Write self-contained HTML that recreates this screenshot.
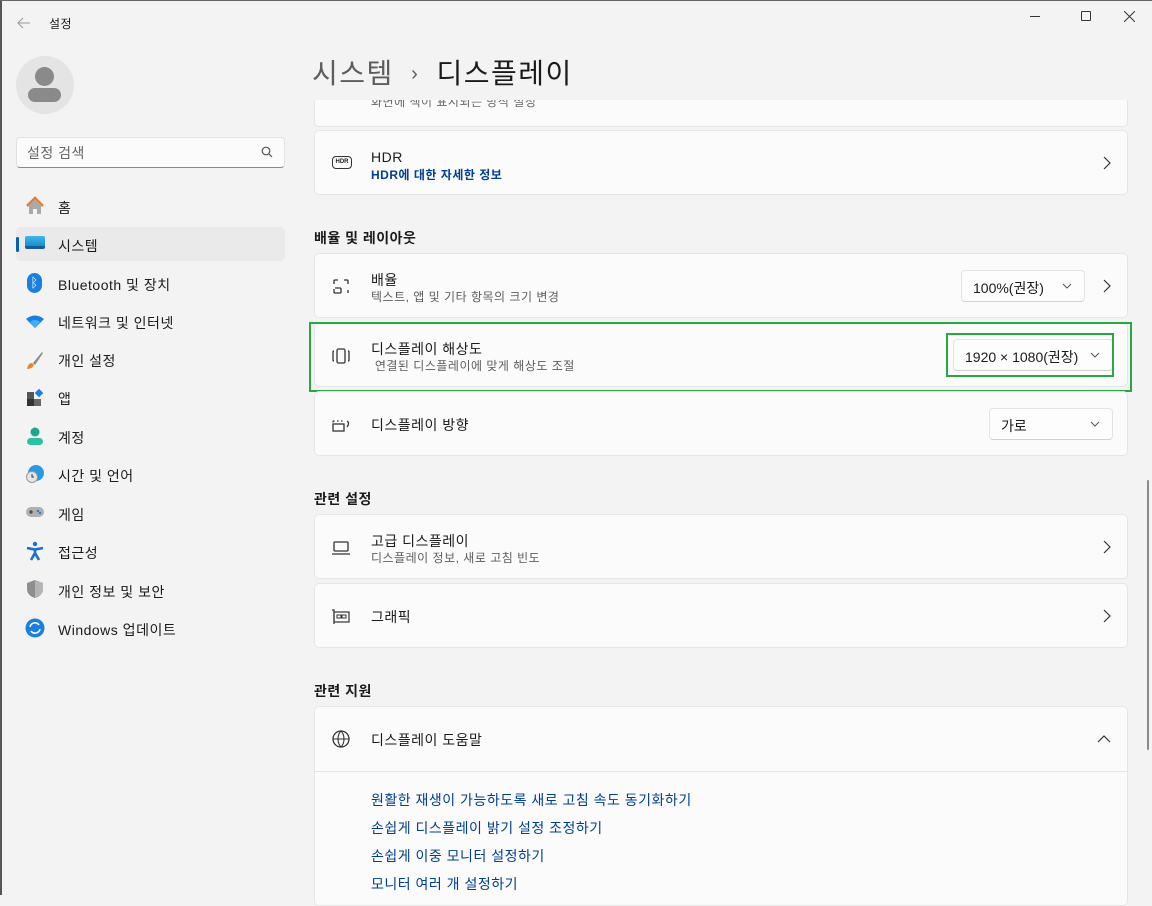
<!DOCTYPE html>
<html><head><meta charset="utf-8"><style>
*{box-sizing:border-box;margin:0;padding:0}
body{width:1152px;height:895px;overflow:hidden;background:#f3f3f3;font-family:"Liberation Sans","Noto Sans CJK KR",sans-serif;color:#1b1b1b;position:relative;font-size:14px;letter-spacing:0.5px}
.a{position:absolute}
.card{position:absolute;left:314px;width:814px;background:#fbfbfb;border:1px solid #e5e5e5;border-radius:5px}
.t{position:absolute;left:56px;font-size:14px;color:#1b1b1b}
.s{position:absolute;left:56px;font-size:12px;color:#5d5d5d}
.ic{position:absolute;left:16px}
.chev{position:absolute;right:16px;top:50%;margin-top:-7px}
.dd{position:absolute;background:#fdfdfd;border:1px solid #e3e3e3;border-bottom-color:#d0d0d0;border-radius:4px;height:32px;font-size:14px;padding:7px 11px;letter-spacing:0}
.dd svg{position:absolute;right:12px;top:12px}
.hd{position:absolute;left:314px;font-size:14px;font-weight:bold;color:#1b1b1b}
.nav{position:absolute;left:58px;font-size:14px;color:#1b1b1b}
.ni{position:absolute;left:25px;width:20px;height:20px}
.lk{position:absolute;left:371px;font-size:14px;color:#003e92}
</style></head><body>
<div class="a" style="left:0;top:0;width:2px;height:895px;background:#555"></div>
<div class="a" style="left:0;top:0;width:1152px;height:1px;background:#666"></div>
<svg class="a" style="left:17px;top:17px" width="14" height="12"><path d="M13 6H1M6 1L1 6l5 5" stroke="#999" fill="none"/></svg>
<div class="a" style="left:49px;top:15px;font-size:12px">설정</div>
<div class="a" style="left:1030px;top:16px;width:10px;height:1px;background:#333"></div>
<div class="a" style="left:1081px;top:11px;width:10px;height:10px;border:1px solid #333;border-radius:1px"></div>
<svg class="a" style="left:1124px;top:11px" width="11" height="11"><path d="M0 0L11 11M11 0L0 11" stroke="#333"/></svg>
<div class="a" style="left:16px;top:56px;width:58px;height:58px;border-radius:50%;background:#e4e4e4"></div>
<div class="a" style="left:35px;top:67px;width:19px;height:19px;border-radius:50%;background:#8a8a8a"></div>
<div class="a" style="left:28px;top:88px;width:33px;height:14px;border-radius:7px;background:#8a8a8a"></div>
<div class="a" style="left:16px;top:137px;width:269px;height:31px;background:#fbfbfb;border:1px solid #e2e2e2;border-bottom:1px solid #8a8a8a;border-radius:4px"></div>
<div class="a" style="left:27px;top:143px;font-size:14px;color:#666">설정 검색</div>
<svg class="a" style="left:261px;top:146px" width="12" height="12"><circle cx="5" cy="5" r="3.8" stroke="#555" fill="none" stroke-width="1.2"/><path d="M8 8l3 3" stroke="#555" stroke-width="1.2"/></svg>
<div class="a" style="left:16px;top:227px;width:269px;height:34px;background:#eaeaea;border-radius:5px"></div>
<div class="a" style="left:16px;top:237px;width:3px;height:15px;background:#005fb8;border-radius:2px"></div>
<svg class="ni" style="top:196px" viewBox="0 0 20 20"><path d="M2 10L10 2l8 8" stroke="#e87a2b" stroke-width="2.5" fill="none"/><path d="M4 9v9h4v-5h4v5h4V9L10 3z" fill="#a9a9a9"/></svg>
<div class="nav" style="top:198px">홈</div>
<div class="ni" style="top:236px;height:13px;background:linear-gradient(#43b5e8,#1a8fd0);border-radius:2px;border-bottom:3px solid #1a5a9a"></div>
<div class="nav" style="top:236px">시스템</div>
<div class="ni" style="left:27px;top:273px;width:15px;height:20px;background:#1a7fe0;border-radius:8px;color:#fff;font-size:13px;text-align:center;line-height:20px">ᛒ</div>
<div class="nav" style="top:275px">Bluetooth 및 장치</div>
<svg class="ni" style="top:313px" viewBox="0 0 20 20"><path d="M1 6Q10-1 19 6L10 15z" fill="#1a7fe0"/><path d="M5 9Q10 5 15 9L10 15z" fill="#3db0f7"/></svg>
<div class="nav" style="top:313px">네트워크 및 인터넷</div>
<svg class="ni" style="top:350px" viewBox="0 0 20 20"><path d="M17 2L8 13l2 2L18 3z" fill="#8a8a8a"/><path d="M7 13q-4 0-5 6 5 0 7-4z" fill="#e8822b"/></svg>
<div class="nav" style="top:351px">개인 설정</div>
<svg class="ni" style="top:388px" viewBox="0 0 20 20"><rect x="2" y="4" width="7" height="7" fill="#555"/><rect x="2" y="11" width="7" height="7" fill="#333"/><rect x="9" y="11" width="7" height="7" fill="#666"/><rect x="11" y="2" width="6" height="6" fill="#1a7fe0" transform="rotate(45 14 5)"/></svg>
<div class="nav" style="top:389px">앱</div>
<svg class="ni" style="top:426px" viewBox="0 0 20 20"><circle cx="10" cy="6" r="4.5" fill="#1fa58e"/><rect x="2" y="12" width="16" height="7" rx="3.5" fill="#2bc0a0"/></svg>
<div class="nav" style="top:428px">계정</div>
<svg class="ni" style="top:464px" viewBox="0 0 20 20"><circle cx="11" cy="9" r="8" fill="#2a9ae0"/><circle cx="7" cy="13" r="5.5" fill="#e6e6e6" stroke="#999"/><path d="M7 10v3h2" stroke="#333" fill="none"/></svg>
<div class="nav" style="top:466px">시간 및 언어</div>
<svg class="ni" style="top:502px" viewBox="0 0 20 20"><rect x="1" y="5" width="18" height="10" rx="5" fill="#b0b0b0"/><path d="M4 10h4M6 8v4" stroke="#333"/><circle cx="13" cy="9" r="1.2" fill="#1a7fe0"/><circle cx="15" cy="11" r="1.2" fill="#1a7fe0"/></svg>
<div class="nav" style="top:505px">게임</div>
<svg class="ni" style="top:541px" viewBox="0 0 20 20"><circle cx="10" cy="3" r="2.2" fill="#1a6fd0"/><path d="M2 7l8 1.5L18 7M10 8v4l-4 7M10 12l4 7" stroke="#1a6fd0" stroke-width="2.6" fill="none"/></svg>
<div class="nav" style="top:543px">접근성</div>
<svg class="ni" style="top:579px" viewBox="0 0 20 20"><path d="M10 1l8 3v6c0 5-4 8-8 9-4-1-8-4-8-9V4z" fill="#8e8e8e"/><path d="M10 1l8 3v6c0 5-4 8-8 9z" fill="#b5b5b5"/></svg>
<div class="nav" style="top:582px">개인 정보 및 보안</div>
<svg class="ni" style="top:618px" viewBox="0 0 20 20"><circle cx="10" cy="10" r="9.5" fill="#1a7fe0"/><path d="M5 9a5 5 0 0 1 9-2M15 11a5 5 0 0 1-9 2" stroke="#fff" stroke-width="1.6" fill="none"/></svg>
<div class="nav" style="top:620px">Windows 업데이트</div>
<div class="a" style="left:312px;top:52px;font-size:28px;color:#1b1b1b;white-space:nowrap;letter-spacing:1.5px"><span style="color:#5d5d5d">시스템</span> <span style="font-size:20px;color:#5d5d5d;margin:0 8px;position:relative;top:-3px">›</span> 디스플레이</div>
<div style="position:absolute;left:0;top:100px;width:1152px;height:795px;overflow:hidden">
<div class="card" style="top:-40px;height:67px"><div class="s" style="top:32px;color:#666">화면에 색이 표시되는 방식 설정</div></div>
<div class="card" style="top:30px;height:65px">
<div class="ic" style="top:25px;left:17px;width:20px;height:13px;border:1.5px solid #333;border-radius:4px;font-size:6px;font-weight:bold;text-align:center;line-height:10px;letter-spacing:0">HDR</div>
<div class="t" style="top:18px">HDR</div>
<div class="s" style="top:35px;color:#003e92;font-weight:bold">HDR에 대한 자세한 정보</div>
<svg class="chev" width="8" height="14"><path d="M1 1l6 6-6 6" stroke="#333" fill="none" stroke-width="1.2"/></svg></div>
</div>
<div class="hd" style="top:228px">배율 및 레이아웃</div>
<div class="card" style="top:253px;height:65px">
<svg class="ic" style="top:23px" width="20" height="20" viewBox="0 0 20 20"><path d="M3 7V4a1 1 0 0 1 1-1h3M13 3h3a1 1 0 0 1 1 1v3M17 13v3M3 12v3a1 1 0 0 0 1 1h5a1 1 0 0 0 1-1v-3a1 1 0 0 0-1-1H4" stroke="#333" fill="none" stroke-width="1.3"/></svg>
<div class="t" style="top:16px">배율</div>
<div class="s" style="top:34px">텍스트, 앱 및 기타 항목의 크기 변경</div>
<div class="dd" style="left:646px;top:16px;width:124px">100%(권장)<svg width="10" height="6"><path d="M1 1l4 4 4-4" stroke="#555" fill="none"/></svg></div>
<svg class="chev" width="8" height="14"><path d="M1 1l6 6-6 6" stroke="#333" fill="none" stroke-width="1.2"/></svg></div>
<div class="card" style="top:322px;height:65px">
<svg class="ic" style="top:23px" width="20" height="20" viewBox="0 0 20 20"><rect x="6" y="3" width="8" height="14" rx="1.5" stroke="#333" fill="none" stroke-width="1.3"/><path d="M3 5q-1 0-1 1v8q0 1 1 1M17 5q1 0 1 1v8q0 1-1 1" stroke="#333" fill="none" stroke-width="1.3"/></svg>
<div class="t" style="top:16px">디스플레이 해상도</div>
<div class="s" style="top:34px">&nbsp;연결된 디스플레이에 맞게 해상도 조절</div>
<div class="dd" style="left:638px;top:16px;width:160px">1920 × 1080(권장)<svg width="10" height="6"><path d="M1 1l4 4 4-4" stroke="#555" fill="none"/></svg></div></div>
<div class="a" style="left:309px;top:322px;width:823px;height:70px;border:2.5px solid #27a844"></div>
<div class="a" style="left:946px;top:333px;width:168px;height:44px;border:2.5px solid #27a844"></div>
<div class="card" style="top:391px;height:65px">
<svg class="ic" style="top:23px" width="22" height="20" viewBox="0 0 22 20"><path d="M2 6h2M6 6h2M10 6h2M2 6v3" stroke="#333" stroke-width="1.2" stroke-dasharray="1.5 1.5"/><rect x="2" y="9" width="11" height="7" stroke="#333" fill="none" stroke-width="1.3"/><path d="M16 6q3 2 0 6" stroke="#333" fill="none" stroke-width="1.3"/></svg>
<div class="t" style="top:23px">디스플레이 방향</div>
<div class="dd" style="left:674px;top:16px;width:124px">가로<svg width="10" height="6"><path d="M1 1l4 4 4-4" stroke="#555" fill="none"/></svg></div></div>
<div class="hd" style="top:489px">관련 설정</div>
<div class="card" style="top:514px;height:65px">
<svg class="ic" style="top:23px" width="20" height="20" viewBox="0 0 20 20"><rect x="3" y="4" width="14" height="9" rx="1" stroke="#333" fill="none" stroke-width="1.3"/><path d="M1 16h18" stroke="#333" stroke-width="1.3"/></svg>
<div class="t" style="top:16px">고급 디스플레이</div>
<div class="s" style="top:34px">디스플레이 정보, 새로 고침 빈도</div>
<svg class="chev" width="8" height="14"><path d="M1 1l6 6-6 6" stroke="#333" fill="none" stroke-width="1.2"/></svg></div>
<div class="card" style="top:583px;height:65px">
<svg class="ic" style="top:23px" width="20" height="20" viewBox="0 0 20 20"><path d="M1 3h2v14" stroke="#333" fill="none" stroke-width="1.2"/><rect x="3" y="5" width="15" height="10" stroke="#333" fill="none" stroke-width="1.2"/><rect x="6" y="8" width="4" height="3" stroke="#333" fill="none"/><rect x="11" y="8" width="4" height="3" stroke="#333" fill="none"/></svg>
<div class="t" style="top:23px">그래픽</div>
<svg class="chev" width="8" height="14"><path d="M1 1l6 6-6 6" stroke="#333" fill="none" stroke-width="1.2"/></svg></div>
<div class="hd" style="top:681px">관련 지원</div>
<div class="card" style="top:706px;height:200px">
<svg class="ic" style="top:22px" width="20" height="20" viewBox="0 0 20 20"><circle cx="10" cy="10" r="8" stroke="#333" fill="none" stroke-width="1.3"/><path d="M2 10h16M10 2c-4 4-4 12 0 16M10 2c4 4 4 12 0 16" stroke="#333" fill="none" stroke-width="1.1"/></svg>
<div class="t" style="top:23px">디스플레이 도움말</div>
<svg class="a" style="right:16px;top:28px" width="14" height="8"><path d="M1 7l6-6 6 6" stroke="#333" fill="none" stroke-width="1.2"/></svg>
<div class="a" style="left:0;top:64px;width:812px;height:1px;background:#e5e5e5"></div></div>
<div class="lk" style="top:790px">원활한 재생이 가능하도록 새로 고침 속도 동기화하기</div>
<div class="lk" style="top:818px">손쉽게 디스플레이 밝기 설정 조정하기</div>
<div class="lk" style="top:846px">손쉽게 이중 모니터 설정하기</div>
<div class="lk" style="top:874px">모니터 여러 개 설정하기</div>
<div class="a" style="left:1147px;top:480px;width:2px;height:270px;background:#8a8a8a;border-radius:1px"></div>
</body></html>
